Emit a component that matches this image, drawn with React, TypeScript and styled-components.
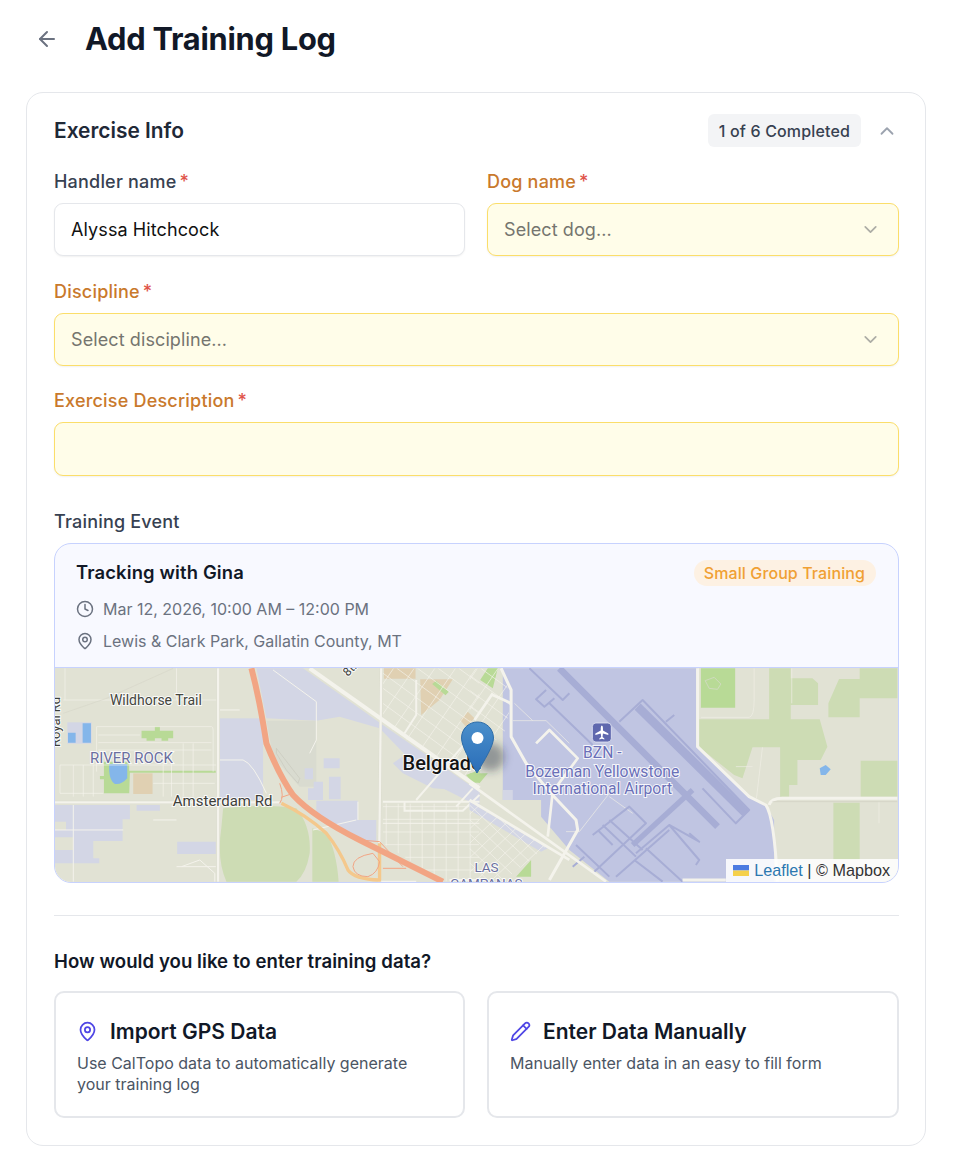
import React from "react";
import styled, { createGlobalStyle } from "styled-components";
import { ArrowLeft, ChevronDown, ChevronUp, Clock, MapPin, Pencil } from "lucide-react";

const Global = createGlobalStyle`
  html, body { margin: 0; padding: 0; background: #fff; }
  body { font-family: Inter, "Liberation Sans", sans-serif; -webkit-font-smoothing: antialiased; }
`;

const Page = styled.div`
  width: 956px;
  height: 1176px;
  box-sizing: border-box;
  padding: 13px 30px 0 26px;
  overflow: hidden;
`;
const Header = styled.header`
  display: flex;
  align-items: center;
  height: 52px;
  margin-bottom: 27px;
`;
const BackButton = styled.button`
  display: flex;
  align-items: center;
  justify-content: center;
  width: 42px;
  height: 42px;
  margin: 0 17px 0 0;
  padding: 0;
  border: 0;
  background: none;
  color: #6b7280;
`;
const Title = styled.h1`
  margin: 0;
  font-size: 30.8px;
  line-height: 52px;
  font-weight: 700;
  letter-spacing: -0.25px;
  color: #111827;
`;
const Card = styled.section`
  box-sizing: border-box;
  height: 1054px;
  border: 1px solid #e5e7eb;
  border-radius: 17px;
  padding: 21px 26px 0 27px;
  display: flex;
  flex-direction: column;
`;
const CardHead = styled.div`
  display: flex;
  align-items: center;
  justify-content: space-between;
  height: 33px;
  margin-bottom: 24px;
`;
const CardTitle = styled.h2`
  margin: 0;
  font-size: 20.9px;
  font-weight: 600;
  color: #1f2937;
`;
const HeadRight = styled.div`
  display: flex;
  align-items: center;
  gap: 15px;
  margin-right: 1px;
  color: #9ca3af;
`;
const Progress = styled.span`
  display: flex;
  align-items: center;
  height: 33px;
  padding: 0 11px;
  border-radius: 6px;
  background: #f3f4f6;
  color: #374151;
  font-size: 16px;
  letter-spacing: 0.15px;
  font-weight: 500;
`;
const Collapse = styled.span`
  display: flex;
  width: 22px;
  height: 22px;
`;
const Row = styled.div`
  display: grid;
  grid-template-columns: 411px 412px;
  gap: 22px;
`;
const Field = styled.div<{ $mb?: number }>`
  display: flex;
  flex-direction: column;
  margin-bottom: ${(p) => p.$mb ?? 25}px;
`;
const Label = styled.label<{ $warn?: boolean }>`
  height: 22px;
  margin-bottom: 10px;
  font-size: 18px;
  letter-spacing: 0.2px;
  line-height: 22px;
  font-weight: 500;
  color: ${(p) => (p.$warn ? "#c9792c" : "#374151")};
`;
const Req = styled.span`
  margin-left: 3px;
  color: #e0544a;
`;
const Control = styled.div<{ $warn?: boolean; $h?: number }>`
  box-sizing: border-box;
  display: flex;
  align-items: center;
  justify-content: space-between;
  height: ${(p) => p.$h ?? 53}px;
  padding: 0 17px 0 16px;
  border: 1px solid ${(p) => (p.$warn ? "#fbde6a" : "#e5e7eb")};
  border-radius: 9px;
  background: ${(p) => (p.$warn ? "#fffde9" : "#fff")};
  box-shadow: 0 1px 2px rgba(0, 0, 0, 0.06);
  font-size: 18px;
  letter-spacing: 0.1px;
  color: #111;
`;
const Placeholder = styled.span`
  color: #75756f;
`;
const SelectChevron = styled.span`
  display: flex;
  color: #adada6;
`;
const EventCard = styled.div`
  box-sizing: border-box;
  height: 340px;
  border: 1px solid #c7d2fe;
  border-radius: 17px;
  overflow: hidden;
  background: #f8f9ff;
`;
const EventInfo = styled.div`
  box-sizing: border-box;
  height: 124px;
  padding: 16px 22px 0 21px;
  border-bottom: 1px solid #c7d2fe;
`;
const EventTop = styled.div`
  display: flex;
  align-items: center;
  justify-content: space-between;
  height: 26px;
  margin-bottom: 7px;
`;
const EventName = styled.div`
  font-size: 18.4px;
  letter-spacing: 0.15px;
  font-weight: 600;
  color: #111827;
  margin-top: -2px;
`;
const Tag = styled.span`
  display: flex;
  align-items: center;
  height: 26px;
  padding: 0 11px 0 10px;
  border-radius: 13px;
  background: #fdf1e3;
  color: #f0a033;
  font-size: 16px;
  letter-spacing: 0.1px;
  font-weight: 500;
`;
const Meta = styled.div`
  display: flex;
  align-items: center;
  gap: 9px;
  height: 32px;
  font-size: 16px;
  color: #6b7280;
`;
const MapBox = styled.div`
  position: relative;
  height: 214px;
`;
const MapSvg = styled.svg`
  display: block;
  width: 100%;
  height: 100%;
`;
const MapText = styled.text<{ $size: number; $color: string; $weight?: number }>`
  font-family: Roboto, sans-serif;
  font-size: ${(p) => p.$size}px;
  font-weight: ${(p) => p.$weight ?? 400};
  fill: ${(p) => p.$color};
  stroke: rgba(255, 255, 255, 0.85);
  stroke-width: 2px;
  paint-order: stroke;
`;
const Attribution = styled.div`
  position: absolute;
  right: 0;
  bottom: 0;
  display: flex;
  align-items: center;
  height: 23px;
  padding: 0 8px 0 7px;
  background: rgba(255, 255, 255, 0.85);
  font-family: "Liberation Sans", sans-serif;
  font-size: 16.2px;
  color: #333;
`;
const Flag = styled.svg`
  width: 16px;
  height: 11px;
  margin-right: 5px;
`;
const AttrLink = styled.span`
  color: #2c78b0;
`;
const Divider = styled.hr`
  width: 100%;
  height: 1px;
  margin: 32px 0 0;
  border: 0;
  background: #e5e7eb;
`;
const Question = styled.h3`
  margin: 33px 0 18px;
  height: 24px;
  font-size: 18.6px;
  letter-spacing: 0.05px;
  line-height: 24px;
  font-weight: 600;
  color: #111827;
`;
const Choice = styled.div`
  box-sizing: border-box;
  height: 127px;
  padding: 23px 21px 0;
  border: 2px solid #e5e7eb;
  border-radius: 10px;
`;
const ChoiceHead = styled.div`
  display: flex;
  align-items: center;
  gap: 12px;
  height: 30px;
  margin-bottom: 7px;
  color: #4f46e5;
`;
const ChoiceTitle = styled.span`
  font-size: 21px;
  font-weight: 600;
  color: #111827;
`;
const ChoiceText = styled.p`
  margin: 0;
  font-size: 16px;
  line-height: 21px;
  color: #4b5563;
`;

const BG = "#e1e2d4";
const LILAC = "#d3d6e5";
const AIR = "#c0c5e2";
const RUN = "#a7adD5";
const ROAD = "#f4f3ec";
const GREEN = "#cddcb4";
const BRIGHT = "#b8da96";
const TAN = "#e0d0b2";
const WATER = "#84b6ea";

const range = (a: number, b: number, s: number) => {
  const o: number[] = [];
  for (let i = a; i <= b; i += s) o.push(i);
  return o;
};

function MapArt() {
  return (
    <MapSvg viewBox="55 668 844 214" preserveAspectRatio="none">
      <defs>
        <linearGradient id="pinFill" x1="0" y1="0" x2="0" y2="1">
          <stop offset="0" stopColor="#4a8fcb" />
          <stop offset="1" stopColor="#2a6db8" />
        </linearGradient>
        <filter id="blur" x="-50%" y="-50%" width="200%" height="200%">
          <feGaussianBlur stdDeviation="4" />
        </filter>
        <clipPath id="northGrid">
          <path d="M1030,25 L1320,25 L1320,390 L1030,190 Z" />
        </clipPath>
        <clipPath id="southGrid">
          <path d="M1030,430 L1320,430 L1320,665 L1210,665 L1030,550 Z" />
        </clipPath>
        <clipPath id="southGrid2">
          <path d="M0,420 L230,560 L100,665 L0,665 Z" />
        </clipPath>
        <clipPath id="northGrid2">
          <path d="M0,25 L100,25 L125,130 L100,240 L0,240 Z" />
        </clipPath>
      </defs>
      <rect x="55" y="668" width="844" height="214" fill={BG} />

      <g transform="translate(40 660) scale(0.3333)" fill="none">
        <path fill={LILAC} d="M650,25 L790,25 L1030,195 L1320,395 L1320,440 L1180,370 L1020,205 L900,170 L830,182 L680,175 Z" />
        <rect x="540" y="175" width="130" height="245" fill={LILAC} />
        <path fill="#d9dbd0" d="M680,182 L830,182 L830,380 L780,380 L700,290 Z" />
        <path fill={LILAC} d="M45,435 L270,435 L270,478 L248,478 L248,543 L160,543 L160,595 L178,595 L178,610 L45,610 Z" />
        <path fill={LILAC} d="M290,435 H360 V452 H290 Z M412,545 H528 V582 H412 Z" />
        <path fill={BG} d="M45,485 H78 V510 H45 Z M45,532 H100 V570 H45 Z" />
        <path fill={LILAC} d="M830,422 H955 V480 H1010 V545 H960 L830,470 Z M795,325 H820 V358 H795 Z M822,365 H850 V420 H822 Z M805,385 H822 V420 H805 Z M852,295 H900 V325 H852 Z M868,350 H903 V418 H868 Z" />
        <path fill={LILAC} d="M1060,310 L1095,285 L1320,420 L1320,395 L1180,385 L1090,340 Z" />
        <path fill={TAN} d="M1033,25 H1128 V56 H1033 Z M1142,58 H1240 L1200,120 L1145,165 Z M1262,180 L1285,155 L1305,175 L1280,200 Z" />
        <path fill={BRIGHT} d="M1178,72 L1190,62 L1228,95 L1218,106 Z M305,212 H345 V200 H360 V212 H400 V235 H385 V242 H365 V235 H345 V242 H320 V235 H305 Z M1280,345 L1320,330 L1320,368 L1300,368 Z" />
        <path fill={GREEN} d="M550,445 Q675,430 770,445 Q815,500 810,580 Q800,640 770,665 H560 Q530,600 545,500 Z M818,505 L860,520 Q890,570 897,665 H818 Z" />
        <rect x="82" y="187" width="73" height="64" fill={LILAC} />
        <path fill={WATER} d="M84,218 H107 V248 H84 Z M128,190 H153 V248 H128 Z" />
        <path fill={BRIGHT} d="M192,305 H268 V332 H528 V338 H270 L268,400 H192 Z M180,348 H192 V358 H180 Z" />
        <path fill={WATER} d="M208,312 H262 V355 Q245,375 225,372 Q205,360 208,312 Z" />
        <rect x="280" y="340" width="58" height="62" fill={TAN} />
        <path stroke={ROAD} strokeWidth="2" d="M70,120 H530 M75,25 V120 M410,25 V120 M170,200 H515 Q520,200 520,210 V335 M170,200 V335 M175,225 H300 M175,248 H515 M175,270 H515 M60,315 H530 M60,315 V400 M100,315 V410 M130,315 V410 M160,315 V410 M370,270 V410 M395,270 V410 M430,250 V410 M460,250 V410 M60,400 H190 M340,370 H525" />
        <path stroke="#d6d7c8" strokeWidth="2" d="M70,160 L200,115 L300,70 L400,25" />
        <path stroke={ROAD} strokeWidth="3" d="M540,150 H600 M540,300 H610 Q640,310 680,400 M700,30 L830,125 V240 L810,280 M410,620 H528 M425,620 L480,600 L525,640 V665 M100,435 V665 M45,510 H250 M340,480 H410 M1030,490 H1320 M955,425 V480 M820,510 L950,480" />
        <path stroke="#c8c9bc" strokeWidth="2" d="M710,265 L780,355 L775,370 L740,330 L710,280 Z" />
        <g clipPath="url(#northGrid)" stroke={ROAD} strokeWidth="2">
          {range(-300, 450, 62).map((d) => (
            <line key={d} x1={1000 + d} y1={25} x2={1500 + d} y2={390} />
          ))}
          {range(0, 900, 62).map((d) => (
            <line key={d} x1={1000 + d} y1={25} x2={750 + d} y2={390} />
          ))}
        </g>
        <g clipPath="url(#southGrid)" stroke={ROAD} strokeWidth="2">
          {range(440, 665, 38).map((y) => (
            <line key={y} x1={1030} y1={y} x2={1320} y2={y} />
          ))}
          {range(1040, 1320, 36).map((x) => (
            <line key={x} x1={x} y1={430} x2={x} y2={665} />
          ))}
        </g>
        <path stroke="#d9d9cc" strokeWidth="9" d="M535,25 V665 M1025,25 L1018,665 M45,427 H720" />
        <path stroke={ROAD} strokeWidth="7" d="M535,25 V665 M1025,25 L1018,665 M45,427 H720" />
        <path stroke={ROAD} strokeWidth="12" d="M810,25 L1320,385" />
        <path stroke={ROAD} strokeWidth="6" d="M1030,425 H1320 M1130,60 V165 L1095,220 M1130,420 L1320,200 M1095,425 V452 H1270 L1320,405 M1300,385 L1250,440 M1025,665 H1130 M1230,660 H1320" />
        <path stroke="#f4c88c" strokeWidth="10" strokeLinejoin="round" d="M725,430 Q800,465 860,520 Q900,570 925,630 Q945,658 1020,660 V550" />
        <path stroke="#f2a584" strokeWidth="3" d="M720,370 Q735,410 720,430 M725,412 L760,400 M960,540 L1020,545 L1090,620 M1030,625 H1100 M1000,580 Q940,590 940,620 Q945,650 985,650 Q1015,640 1020,605 Z" />
        <path stroke="#f2a584" strokeWidth="18" d="M635,25 Q660,120 680,250 Q720,350 760,405 Q820,470 960,540 L1100,610 L1210,665" />
      </g>

      <g transform="translate(470 660) scale(0.3333)" fill="none">
        <path fill={AIR} d="M100,25 H685 V260 L840,410 L890,435 L915,480 L915,665 H420 L300,570 L215,470 V420 H100 Z" />
        <path fill={LILAC} d="M0,425 L235,565 L215,575 L0,450 Z M100,390 H130 V420 H100 Z" />
        <path fill={BRIGHT} d="M32,60 L55,25 H85 L70,85 Z M695,25 H798 V143 H695 Z M140,650 L185,600 V650 Z M0,340 H55 L30,370 Z" />
        <path fill={GREEN} d="M900,25 H965 V55 H1030 L1047,70 V135 H965 V178 H1052 L1075,260 L1055,300 H985 V375 H960 V410 H933 V262 H850 L820,355 L795,345 L690,262 V178 H900 Z M1110,57 H1172 V25 H1285 V115 H1172 V172 H1078 V130 Z M1175,302 H1285 V410 H1175 Z M1093,428 H1172 V600 H1093 Z" />
        <path stroke="#d9dbd0" strokeWidth="2" fill={BRIGHT} d="M708,62 L735,52 L755,72 L745,88 L720,85 Z" />
        <path fill={WATER} d="M1052,325 L1070,315 L1085,328 L1070,345 L1055,345 Z" />
        <path stroke="#f0efe6" strokeWidth="2" d="M695,172 H840 Q855,170 855,120 V25 M880,262 L862,415 M800,320 H850 M135,130 L190,182 H230 L300,250 M130,182 H190 M420,400 L330,515 H290 M420,410 L490,460 M1230,425 V490 M968,25 V130" />
        <g clipPath="url(#northGrid2)" stroke={ROAD} strokeWidth="2">
          {range(-300, 400, 62).map((d) => (
            <line key={d} x1={-100 + d} y1={25} x2={400 + d} y2={390} />
          ))}
          {range(0, 600, 62).map((d) => (
            <line key={d} x1={-100 + d} y1={25} x2={-350 + d} y2={390} />
          ))}
        </g>
        <g clipPath="url(#southGrid2)" stroke={ROAD} strokeWidth="2">
          {range(-200, 300, 46).map((d) => (
            <line key={d} x1={d} y1={420} x2={d + 260} y2={665} />
          ))}
          {range(0, 600, 46).map((d) => (
            <line key={d} x1={d} y1={420} x2={d - 260} y2={665} />
          ))}
        </g>
        <path stroke={RUN} strokeWidth="20" d="M270,25 L745,500" />
        <path stroke={RUN} strokeWidth="26" d="M505,140 L830,460" />
        <path stroke={RUN} strokeWidth="16" d="M670,390 L490,555" />
        <path stroke={RUN} strokeWidth="6" strokeLinejoin="round" d="M180,25 L280,120 L300,100 M230,90 L200,118 L225,140 L255,115 M240,130 L370,255 M450,185 L520,120 L840,450 L800,490 L700,385 M590,185 L615,165 M370,525 L480,440 L530,490 L370,640 M400,495 L500,590 M420,480 L520,570 M385,510 L430,555 M320,555 L420,650 M345,590 L310,620 M500,580 L600,495 L690,600 L680,615 M600,495 L690,545 L660,520 M530,565 L640,665 M495,600 L580,665 M440,650 L600,510" />
        <path stroke={ROAD} strokeWidth="9" strokeLinejoin="round" d="M95,25 L125,90 V230 L170,310 L240,395 L320,480 L325,510 L240,660" />
        <path stroke={ROAD} strokeWidth="8" strokeLinejoin="round" d="M70,105 L125,130 M70,100 L15,180 M200,250 L240,210 L325,295 L250,395 L235,530 M0,370 L410,665 M0,420 L300,600" />
        <path stroke={ROAD} strokeWidth="9" strokeLinejoin="round" d="M685,25 V260 L840,410 L890,435 Q915,470 925,665 M900,435 Q905,415 940,415 H1285 M640,660 H770" />
        <path stroke="#c9cabd" strokeWidth="1.5" d="M910,425 H1285" />
      </g>

      <MapText x="110" y="705" $size={14} $color="#44463f">Wildhorse Trail</MapText>
      <MapText x="90" y="763" $size={15} $color="#6a6f9f">RIVER ROCK</MapText>
      <MapText x="173" y="806" $size={15} $color="#3e403a">Amsterdam Rd</MapText>
      <MapText x="-747" y="60" $size={13} $color="#3e403a" transform="rotate(-90)">Royal Rd</MapText>
      <MapText x="0" y="0" $size={12} $color="#3e403a" transform="translate(348 677) rotate(-45)">8th</MapText>
      <MapText x="403" y="770" $size={20} $weight={500} $color="#141414">Belgrade</MapText>
      <MapText x="603" y="758" $size={15.7} $color="#6a70b8" textAnchor="middle">BZN -</MapText>
      <MapText x="603" y="777" $size={15.7} $color="#6a70b8" textAnchor="middle">Bozeman Yellowstone</MapText>
      <MapText x="603" y="794" $size={15.7} $color="#6a70b8" textAnchor="middle">International Airport</MapText>
      <MapText x="487" y="872" $size={13.5} $color="#6a6f9f" textAnchor="middle">LAS</MapText>
      <MapText x="487" y="888" $size={13.5} $color="#6a6f9f" textAnchor="middle">CAMPANAS</MapText>

      <rect x="593" y="723" width="19" height="19" rx="3.5" fill="#5f68ae" stroke="#e6e8f5" strokeWidth="0.8" />
      <path fill="#fff" d="M602.5,725.5 Q603.6,725.5 603.6,728 L603.6,730.5 L609,733.5 L609,735 L603.6,733.5 L603.2,737 L605,738.5 L605,739.5 L602.5,738.8 L600,739.5 L600,738.5 L601.8,737 L601.4,733.5 L596,735 L596,733.5 L601.4,730.5 L601.4,728 Q601.4,725.5 602.5,725.5 Z" />

      <ellipse cx="491" cy="757" rx="14" ry="14" fill="rgba(40,50,70,0.42)" filter="url(#blur)" />
      <path fill="url(#pinFill)" stroke="#2e6ca8" strokeWidth="1" d="M478,722 C487,722 494,729 494,738 C494,746 485,760 477.5,773 C470,760 462,746 462,738 C462,729 469,722 478,722 Z" />
      <circle cx="478" cy="738" r="6" fill="#fff" />
    </MapSvg>
  );
}

export default function App() {
  return (
    <Page>
      <Global />
      <Header>
        <BackButton aria-label="Back">
          <ArrowLeft size={24} strokeWidth={2} />
        </BackButton>
        <Title>Add Training Log</Title>
      </Header>
      <Card>
        <CardHead>
          <CardTitle>Exercise Info</CardTitle>
          <HeadRight>
            <Progress>1 of 6 Completed</Progress>
            <Collapse>
              <ChevronUp size={22} strokeWidth={2} />
            </Collapse>
          </HeadRight>
        </CardHead>
        <Row>
          <Field>
            <Label>Handler name<Req>*</Req></Label>
            <Control>Alyssa Hitchcock</Control>
          </Field>
          <Field>
            <Label $warn>Dog name<Req>*</Req></Label>
            <Control $warn>
              <Placeholder>Select dog...</Placeholder>
              <SelectChevron><ChevronDown size={21} strokeWidth={2} /></SelectChevron>
            </Control>
          </Field>
        </Row>
        <Field $mb={24}>
          <Label $warn>Discipline<Req>*</Req></Label>
          <Control $warn>
            <Placeholder>Select discipline...</Placeholder>
            <SelectChevron><ChevronDown size={21} strokeWidth={2} /></SelectChevron>
          </Control>
        </Field>
        <Field $mb={35}>
          <Label $warn>Exercise Description<Req>*</Req></Label>
          <Control $warn $h={54} />
        </Field>
        <Label>Training Event</Label>
        <EventCard>
          <EventInfo>
            <EventTop>
              <EventName>Tracking with Gina</EventName>
              <Tag>Small Group Training</Tag>
            </EventTop>
            <Meta><Clock size={18} strokeWidth={2} />Mar 12, 2026, 10:00 AM – 12:00 PM</Meta>
            <Meta><MapPin size={18} strokeWidth={2} />Lewis &amp; Clark Park, Gallatin County, MT</Meta>
          </EventInfo>
          <MapBox>
            <MapArt />
            <Attribution>
              <Flag viewBox="0 0 16 11">
                <rect width="16" height="5.5" fill="#4c7be1" />
                <rect y="5.5" width="16" height="5.5" fill="#f5d04a" />
              </Flag>
              <AttrLink>Leaflet</AttrLink>&nbsp;|&nbsp;© Mapbox
            </Attribution>
          </MapBox>
        </EventCard>
        <Divider />
        <Question>How would you like to enter training data?</Question>
        <Row>
          <Choice>
            <ChoiceHead>
              <MapPin size={21} strokeWidth={2} />
              <ChoiceTitle>Import GPS Data</ChoiceTitle>
            </ChoiceHead>
            <ChoiceText>Use CalTopo data to automatically generate your training log</ChoiceText>
          </Choice>
          <Choice>
            <ChoiceHead>
              <Pencil size={21} strokeWidth={2} />
              <ChoiceTitle>Enter Data Manually</ChoiceTitle>
            </ChoiceHead>
            <ChoiceText>Manually enter data in an easy to fill form</ChoiceText>
          </Choice>
        </Row>
      </Card>
    </Page>
  );
}
